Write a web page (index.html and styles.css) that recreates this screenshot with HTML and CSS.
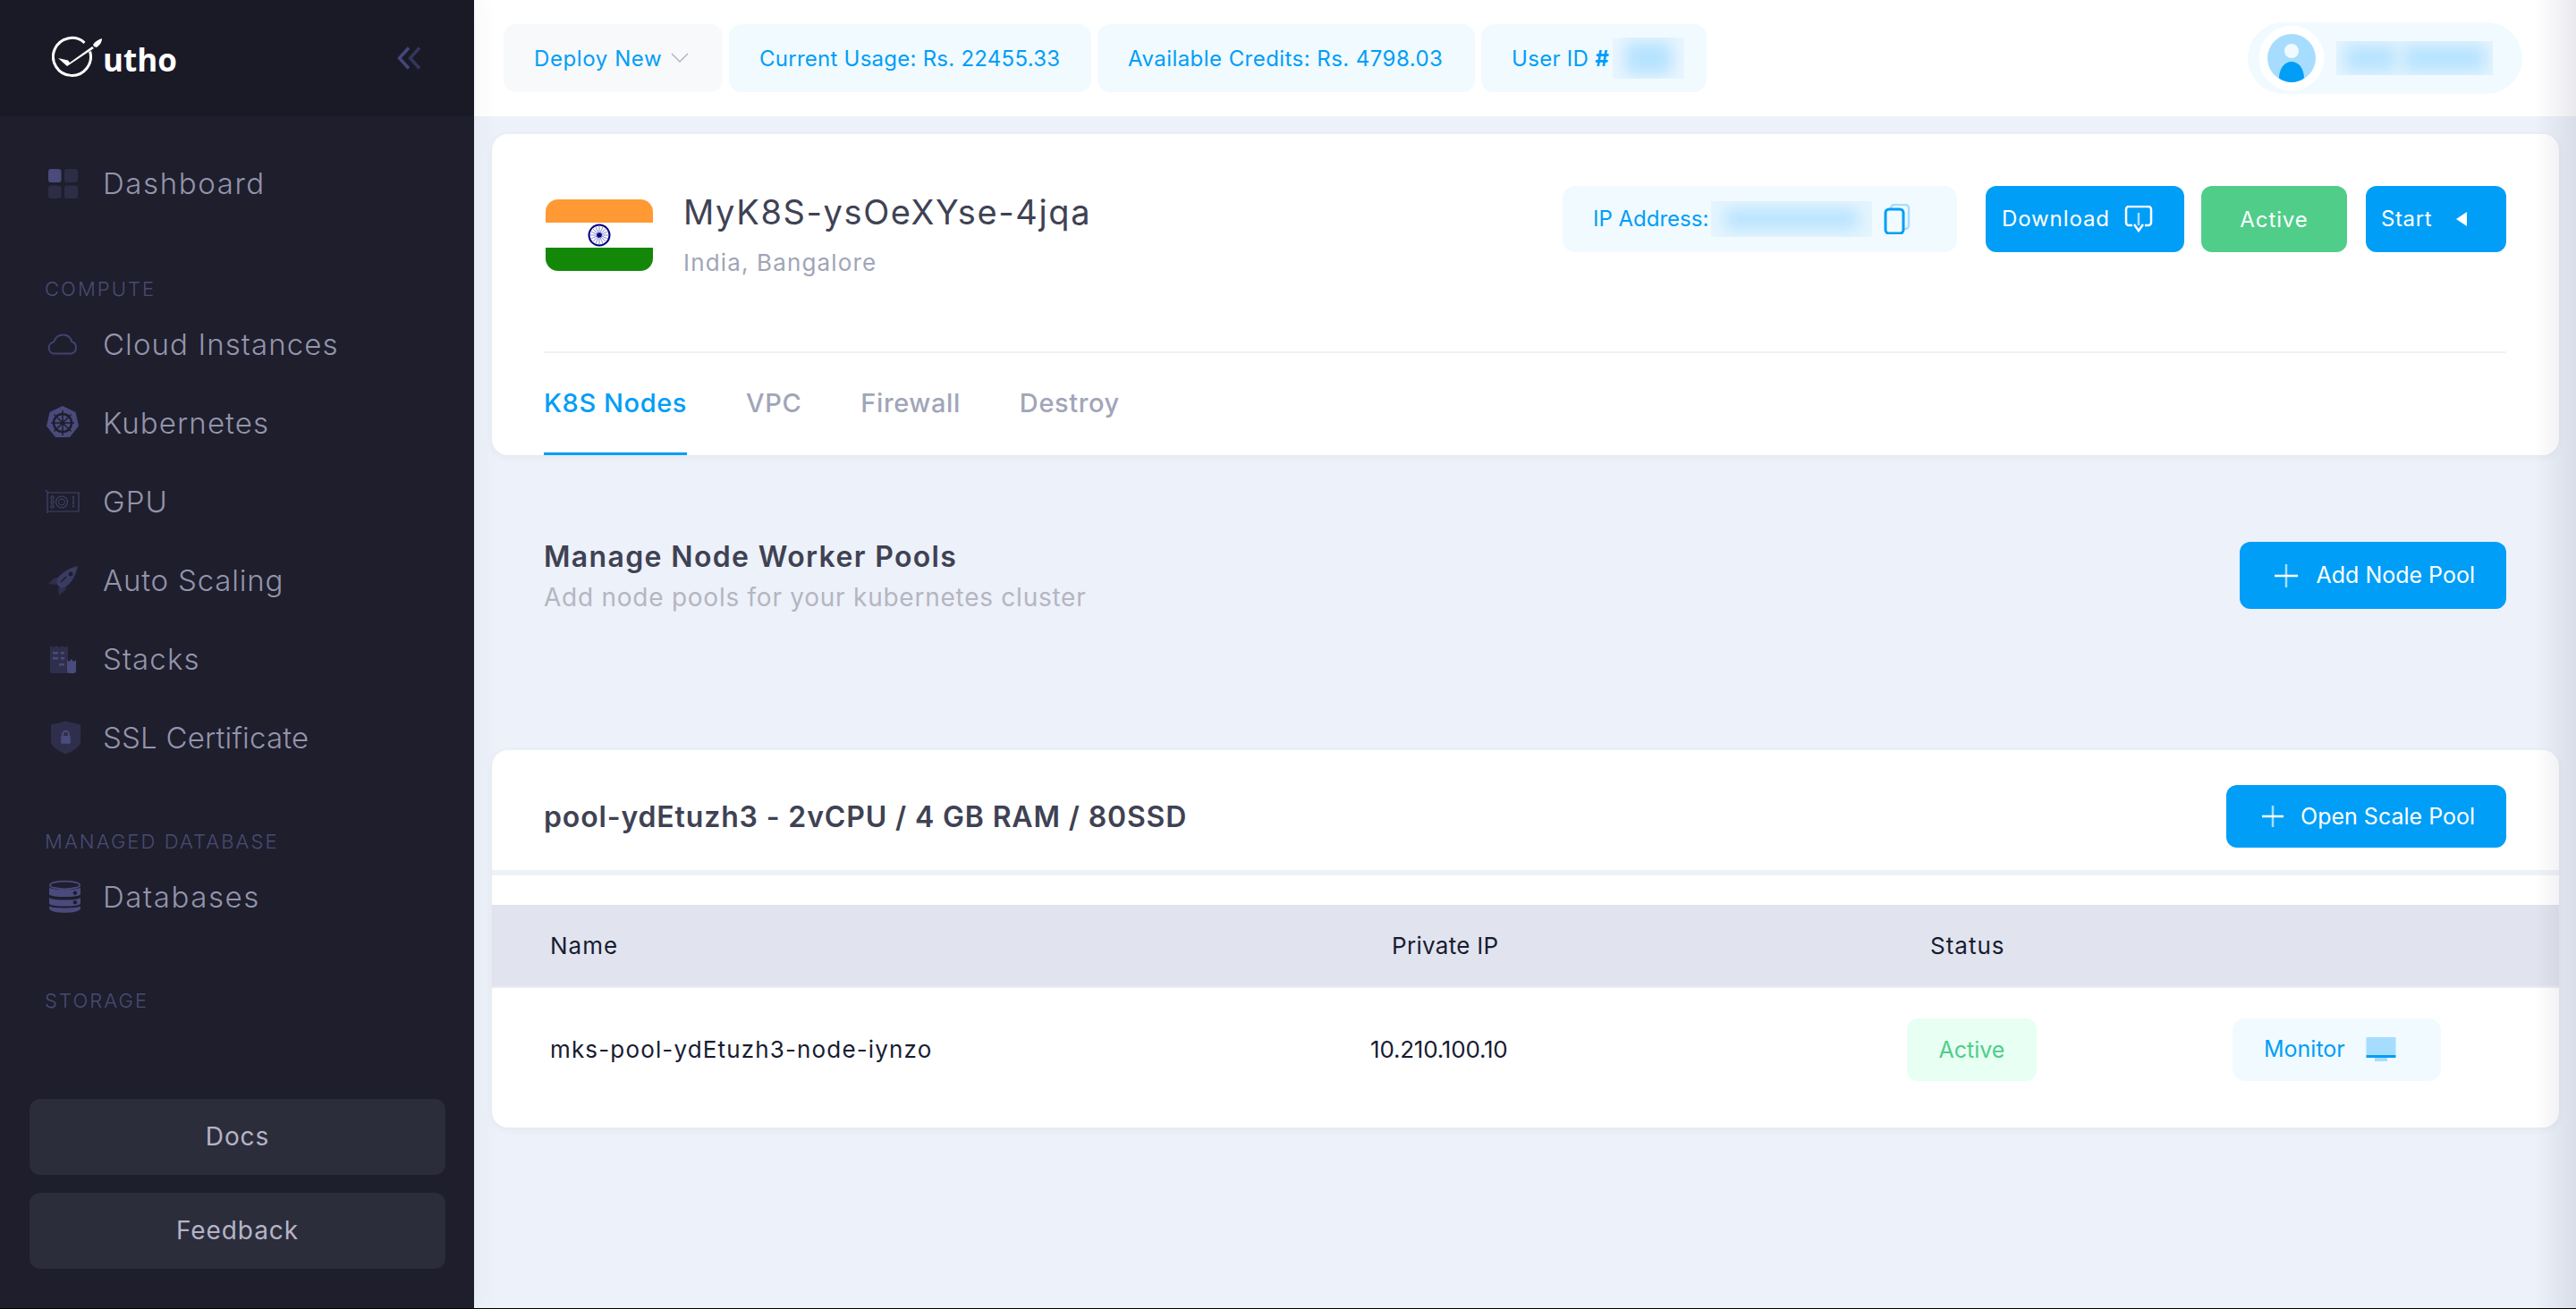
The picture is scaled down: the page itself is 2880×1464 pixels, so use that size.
FILE: index.html

```html
<!DOCTYPE html>
<html>
<head>
<meta charset="utf-8">
<title>MyK8S-ysOeXYse-4jqa</title>
<link rel="stylesheet" href="styles.css">
</head>
<body>
<div class="app">
  <aside class="sidebar">
    <div class="brand">
      <div class="logo">
        <svg class="logo-mark" width="60" height="50" viewBox="0 0 60 50">
          <path d="M36.5 7.8A21 21 0 1 0 42.6 17.5" fill="none" stroke="#fff" stroke-width="3"/>
          <path d="M7 25l11 2.5 2 2.5L45 12l2 2-30 20z" fill="#fff"/>
          <path d="M46 10c3-4 6-6 10-7 0 4-2 7-6 10l-3-1z" fill="#fff"/>
        </svg>
        <span class="logo-text">utho</span>
      </div>
      <svg class="collapse" width="27" height="26" viewBox="0 0 27 26">
        <path d="M13 1.5L2.5 13 13 24.5" fill="none" stroke="#45467a" stroke-width="3.5"/>
        <path d="M25 1.5L14.5 13 25 24.5" fill="none" stroke="#34355a" stroke-width="3.5"/>
      </svg>
    </div>
    <nav class="nav">
      <a class="nav-item nav-first nav-wide">
        <span class="nav-icon">
          <svg width="33" height="33" viewBox="0 0 33 33">
            <rect x="0" y="0" width="14.5" height="15" rx="3" fill="#4a4b7c"/>
            <rect x="18" y="0" width="15" height="15" rx="3" fill="#2d2d46"/>
            <rect x="0" y="18.5" width="14.5" height="14.5" rx="3" fill="#2d2d46"/>
            <rect x="18" y="18.5" width="15" height="14.5" rx="3" fill="#2d2d46"/>
          </svg>
        </span>
        Dashboard
      </a>
      <div class="nav-label nav-label-compute">COMPUTE</div>
      <a class="nav-item">
        <span class="nav-icon">
          <svg width="36" height="24" viewBox="0 0 36 24">
            <path d="M9 22.5a6.5 6.5 0 0 1-1-12.900C10 4 14 1.5 18.5 1.5c4.8 0 8.5 3 9.7 7.5a7 7 0 0 1-.7 13.5z" fill="none" stroke="#42436f" stroke-width="2"/>
          </svg>
        </span>
        Cloud Instances
      </a>
      <a class="nav-item">
        <span class="nav-icon">
          <svg width="40" height="40" viewBox="0 0 40 40">
            <path d="M20 1l14.5 7 3.5 15.5-10 12.500H12L2 23.5 5.5 8z" fill="#4a4b7c"/>
            <circle cx="20" cy="20" r="10" fill="none" stroke="#1e1e2d" stroke-width="2.4"/>
            <circle cx="20" cy="20" r="2.5" fill="#1e1e2d"/>
            <path d="M20 6v28M7 20h26M10.5 10.5l19 19M29.5 10.5l-19 19" stroke="#1e1e2d" stroke-width="1.5"/>
          </svg>
        </span>
        Kubernetes
      </a>
      <a class="nav-item">
        <span class="nav-icon">
          <svg width="40" height="28" viewBox="0 0 40 28">
            <path d="M1 1l2 2v24M3 4h35v21H3" fill="none" stroke="#42436f" stroke-width="1.2"/>
            <circle cx="19" cy="14.5" r="6.5" fill="none" stroke="#42436f" stroke-width="1.2"/>
            <circle cx="19" cy="14.5" r="3.5" fill="none" stroke="#42436f"/>
            <path d="M7 8h3v3H7zM7 13h3v3H7zM7 18h3v3H7z" fill="none" stroke="#42436f"/>
            <path d="M32 8v13" stroke="#42436f" stroke-width="2" stroke-dasharray="1.5 1"/>
          </svg>
        </span>
        GPU
      </a>
      <a class="nav-item nav-tight">
        <span class="nav-icon">
          <svg width="33" height="33" viewBox="0 0 33 33">
            <path d="M13 12l-7 2-6 6 8 1z" fill="#2f2f4c"/>
            <path d="M21 20l-2 7-7 6-1-8z" fill="#2f2f4c"/>
            <path d="M33 0C24 2 15 7 10 14l-1 6 5 5 6-2c7-5 11-14 13-23z" fill="#3a3b63"/>
            <circle cx="25" cy="9" r="2.5" fill="#1e1e2d"/>
            <path d="M14 18l6-6M3 31l6-6" stroke="#1e1e2d" stroke-width="1.5"/>
          </svg>
        </span>
        Auto Scaling
      </a>
      <a class="nav-item">
        <span class="nav-icon">
          <svg width="29" height="32" viewBox="0 0 29 32">
            <path d="M0 1l3.5 2L7 1l3.5 2L14 1l3.5 2L20 1v31H2a2 2 0 0 1-2-2z" fill="#2f2f4c"/>
            <path d="M19 17l2 2 3-3 2 3 3-2v12a3 3 0 0 1-3 3h-4a3 3 0 0 1-3-3z" fill="#4a4b7c"/>
            <path d="M3 8h6v2.5H3zM12 8h4v2.5h-4zM3 14h6v2.5H3zM12 14h4v2.5h-4zM10 21h6v2.5h-6z" fill="#4a4b7c"/>
          </svg>
        </span>
        Stacks
      </a>
      <a class="nav-item nav-ssl">
        <span class="nav-icon nav-icon-shield">
          <svg width="34" height="38" viewBox="0 0 34 38">
            <path d="M17 0l17 4v20c0 5-9 11-17 14C9 35 0 29 0 24V4z" fill="#2f2f4c"/>
            <rect x="11.5" y="17" width="11" height="9" rx="1" fill="#4a4b7c"/>
            <path d="M13.5 18v-3a3.5 3.5 0 0 1 7 0v3" fill="none" stroke="#4a4b7c" stroke-width="2"/>
          </svg>
        </span>
        SSL Certificate
      </a>
      <div class="nav-label nav-label-db">MANAGED DATABASE</div>
      <a class="nav-item nav-wide">
        <span class="nav-icon nav-icon-db">
          <svg width="40" height="42" viewBox="0 0 40 42">
            <ellipse cx="20" cy="6" rx="19" ry="5" fill="none" stroke="#4a4b7c" stroke-width="2"/>
            <path d="M0 9c4 4 36 4 40 0v9c-4 4-36 4-40 0z" fill="#4a4b7c"/>
            <path d="M0 22c4 4 36 4 40 0v8c-4 4-36 4-40 0z" fill="#4a4b7c"/>
            <path d="M0 33c4 3 36 3 40 0v3c-2 7-38 7-40 0z" fill="#4a4b7c"/>
            <circle cx="33" cy="16" r="2.5" fill="#1e1e2d"/>
            <circle cx="33" cy="28" r="2.5" fill="#1e1e2d"/>
          </svg>
        </span>
        Databases
      </a>
      <div class="nav-label nav-label-storage">STORAGE</div>
    </nav>
    <div class="side-foot">
      <a class="side-btn">Docs</a>
      <a class="side-btn">Feedback</a>
    </div>
  </aside>

  <main class="main">
    <header class="topbar">
      <div class="pills">
        <div class="pill pill-deploy">
          <span>Deploy New</span>
          <svg width="20" height="12" viewBox="0 0 20 12"><path d="M1 1l9 9 9-9" fill="none" stroke="#b5b5c3" stroke-width="1.5"/></svg>
        </div>
        <div class="pill pill-usage">Current Usage: Rs. 22455.33</div>
        <div class="pill pill-credits">Available Credits: Rs. 4798.03</div>
        <div class="pill pill-user"><span>User ID <b>#</b></span><span class="blur-box blur-id"><i></i></span></div>
      </div>
      <div class="profile">
        <svg class="avatar" width="74" height="74" viewBox="0 0 74 74">
          <circle cx="37" cy="37" r="36.5" fill="#fff"/>
          <circle cx="37" cy="37" r="27" fill="#a6ddff"/>
          <circle cx="37" cy="29" r="8" fill="#f1faff"/>
          <path d="M37 64a26 26 0 0 1-14-4.5C23 49 29 41 37 41s14 8 14 18.5A26 26 0 0 1 37 64z" fill="#009ef7"/>
        </svg>
        <span class="blur-box blur-name"><i></i><i></i></span>
      </div>
    </header>

    <div class="content">
      <section class="card cluster">
        <div class="cluster-head">
          <div class="flag">
            <svg width="26" height="26" viewBox="0 0 26 26">
              <circle cx="13" cy="13" r="11.5" fill="#fff" stroke="#000080" stroke-width="2"/>
              <path d="M13 2v22M2 13h22M5.2 5.2l15.6 15.6M20.8 5.2L5.2 20.8M8.8 3l8.4 20M17.2 3L8.8 23M3 8.8l20 8.4M23 8.8L3 17.2" stroke="#5a5ac0" stroke-width="0.7"/>
              <circle cx="13" cy="13" r="2.8" fill="#000080"/>
            </svg>
          </div>
          <div class="cluster-name">
            <h1>MyK8S-ysOeXYse-4jqa</h1>
            <p>India, Bangalore</p>
          </div>
          <div class="cluster-actions">
            <div class="ip-box"><span class="ip-label">IP Address:</span><span class="blur-box blur-ip"><i></i></span>
              <svg width="30" height="34" viewBox="0 0 30 34">
                <rect x="8" y="1" width="20" height="27" rx="4" fill="none" stroke="#a6ddff" stroke-width="2.5"/>
                <rect x="2" y="6" width="20" height="27" rx="4" fill="#f1faff" stroke="#009ef7" stroke-width="3"/>
              </svg>
            </div>
            <a class="btn btn-download"><span class="btn-text">Download</span>
              <svg width="32" height="30" viewBox="0 0 32 30">
                <path d="M9 22H5a3 3 0 0 1-3-3V4a3 3 0 0 1 3-3h22a3 3 0 0 1 3 3v15a3 3 0 0 1-3 3h-4" fill="none" stroke="#fff" stroke-width="2.5"/>
                <path d="M16 8v14" stroke="#a6ddff" stroke-width="2.5"/>
                <path d="M11 21l5 7 5-7" fill="none" stroke="#fff" stroke-width="2.5"/>
              </svg>
            </a>
            <a class="btn btn-active">Active</a>
            <a class="btn btn-start"><span class="btn-text">Start</span>
              <svg width="14" height="16" viewBox="0 0 14 16"><path d="M13 0v16L1 8z" fill="#fff"/></svg>
            </a>
          </div>
        </div>
        <div class="tabs">
          <a class="tab tab-on">K8S Nodes</a>
          <a class="tab">VPC</a>
          <a class="tab">Firewall</a>
          <a class="tab">Destroy</a>
        </div>
      </section>

      <section class="pools-head">
        <div>
          <h2>Manage Node Worker Pools</h2>
          <p>Add node pools for your kubernetes cluster</p>
        </div>
        <a class="btn btn-add">
          <svg width="26" height="26" viewBox="0 0 26 26"><path d="M13 0v26" stroke="#a6ddff" stroke-width="2.5"/><path d="M0 13h26" stroke="#fff" stroke-width="2.5"/></svg>
          <span class="btn-text">Add Node Pool</span>
        </a>
      </section>

      <section class="card pool">
        <div class="pool-head">
          <h3>pool-ydEtuzh3 - 2vCPU / 4 GB RAM / 80SSD</h3>
          <a class="btn btn-scale">
            <svg width="24" height="24" viewBox="0 0 24 24"><path d="M12 0v24" stroke="#a6ddff" stroke-width="2.5"/><path d="M0 12h24" stroke="#fff" stroke-width="2.5"/></svg>
            Open Scale Pool
          </a>
        </div>
        <div class="table">
          <div class="row row-head">
            <div class="col-name">Name</div>
            <div class="col-ip">Private IP</div>
            <div class="col-status">Status</div>
            <div></div>
          </div>
          <div class="row row-body">
            <div class="col-name">mks-pool-ydEtuzh3-node-iynzo</div>
            <div class="col-ip">10.210.100.10</div>
            <div class="col-status"><span class="chip">Active</span></div>
            <div class="col-action">
              <a class="monitor"><span class="monitor-text">Monitor</span>
                <svg width="34" height="28" viewBox="0 0 34 28">
                  <rect x="0.5" y="0" width="33" height="20" fill="#a6ddff"/>
                  <rect x="0.5" y="20" width="33" height="3" fill="#009ef7"/>
                  <rect x="10" y="23" width="14" height="4" fill="#a6ddff"/>
                </svg>
              </a>
            </div>
          </div>
        </div>
      </section>
    </div>
  </main>
</div>
<div class="edge"></div>
</body>
</html>
```

FILE: styles.css

```css
* {
  box-sizing: border-box;
}
html, body {
  margin: 0;
  height: 100%;
  overflow: hidden;
}
body {
  font-family: "Inter", "Open Sans", sans-serif;
  background: #edf1f9;
  color: #3f4254;
}
a {
  text-decoration: none;
}
h1, h2, h3, p {
  margin: 0;
}
.app {
  display: flex;
  height: 1464px;
  border-bottom: 1px solid #000;
}

/* sidebar */
.sidebar {
  flex: 0 0 530px;
  background: #1e1e2d;
  display: flex;
  flex-direction: column;
  box-shadow: 0 0 30px rgba(60, 60, 90, 0.06);
  z-index: 2;
}
.brand {
  height: 130px;
  background: #1a1a27;
  display: flex;
  align-items: center;
  justify-content: space-between;
  padding: 0 59px 0 58px;
}
.logo {
  display: flex;
  align-items: center;
}
.logo-text {
  font-family: "Open Sans", sans-serif;
  font-weight: 700;
  font-size: 35px;
  color: #fff;
  margin-left: -3px;
  margin-top: 2px;
}
.nav {
  display: flex;
  flex-direction: column;
  padding-left: 50px;
}
.nav-item {
  height: 88px;
  display: flex;
  align-items: center;
  font-size: 33px;
  letter-spacing: 1.1px;
  font-weight: 300;
  color: #9494ab;
}
.nav-wide {
  letter-spacing: 1.6px;
}
.nav-tight {
  letter-spacing: 0.8px;
}
.nav-ssl {
  letter-spacing: 0.2px;
}
.nav-icon {
  width: 40px;
  margin-right: 25px;
  display: flex;
  justify-content: center;
  align-items: center;
}
.nav-icon-shield {
  padding-left: 7px;
}
.nav-icon-db {
  padding-left: 5px;
}
.nav-first {
  margin-top: 31px;
}
.nav-label {
  font-size: 22px;
  font-weight: 300;
  letter-spacing: 2.1px;
  color: #4a4b72;
  height: 30px;
  line-height: 30px;
}
.nav-label-compute {
  margin-top: 59px;
  margin-bottom: 3px;
}
.nav-label-db {
  margin-top: 57px;
  margin-bottom: 3px;
}
.nav-label-storage {
  margin-top: 57px;
}
.side-foot {
  margin-top: auto;
  padding: 0 32px 44px 33px;
  display: flex;
  flex-direction: column;
  gap: 20px;
}
.side-btn {
  height: 85px;
  padding-bottom: 2px;
  border-radius: 12px;
  background: #2b2d3b;
  color: #b5b3c7;
  font-size: 28px;
  letter-spacing: 0.9px;
  display: flex;
  align-items: center;
  justify-content: center;
}

/* top bar */
.main {
  flex: 1;
  min-width: 0;
}
.topbar {
  height: 130px;
  background: #fff;
  display: flex;
  align-items: center;
  justify-content: space-between;
  padding: 0 60px 0 33px;
}
.pills {
  display: flex;
  gap: 7px;
}
.pill {
  height: 76px;
  border-radius: 14px;
  background: #f1faff;
  color: #009ef7;
  font-size: 24px;
  letter-spacing: 0.3px;
  display: flex;
  align-items: center;
  padding-left: 34px;
  white-space: nowrap;
}
.pill-deploy {
  width: 245px;
  background: #f7f9fb;
  letter-spacing: 0.6px;
  gap: 10px;
}
.pill-usage {
  width: 405px;
  letter-spacing: 0.25px;
}
.pill-credits {
  width: 422px;
  letter-spacing: 0.45px;
}
.pill-user {
  width: 252px;
  gap: 4px;
}
.blur-box {
  display: inline-flex;
  overflow: hidden;
  align-items: center;
  justify-content: center;
}
.blur-box i {
  display: block;
  background: #b4e2ff;
  filter: blur(9px);
}
.blur-id {
  width: 80px;
  height: 46px;
  background: #eaf6fe;
}
.blur-id i {
  width: 52px;
  height: 36px;
}
.profile {
  width: 307px;
  height: 80px;
  border-radius: 40px;
  background: #f1faff;
  display: flex;
  align-items: center;
  padding-left: 12px;
  gap: 13px;
}
.blur-name {
  width: 175px;
  height: 38px;
  background: #e4f4fe;
  gap: 10px;
}
.blur-name i:first-child {
  width: 56px;
  height: 28px;
}
.blur-name i:last-child {
  width: 90px;
  height: 28px;
}

/* cluster card */
.content {
  padding: 20px 19px 0 20px;
}
.card {
  background: #fff;
  border-radius: 18px;
  box-shadow: 0 2px 8px rgba(60, 70, 110, 0.06);
}
.cluster {
  height: 359px;
  padding: 58px 59px 0 60px;
}
.cluster-head {
  display: flex;
  align-items: flex-start;
  height: 187px;
  border-bottom: 2px solid #eff2f5;
  margin-left: -2px;
  padding-left: 2px;
}
.flag {
  width: 120px;
  height: 80px;
  margin-top: 15px;
  border-radius: 14px;
  background: linear-gradient(#ff9933 33%, #fff 33%, #fff 67%, #138808 67%);
  display: flex;
  align-items: center;
  justify-content: center;
}
.cluster-name {
  margin-left: 34px;
}
.cluster-name h1 {
  font-size: 38px;
  letter-spacing: 1.6px;
  font-weight: 400;
  line-height: 54px;
  margin-top: 2px;
}
.cluster-name p {
  font-size: 26px;
  letter-spacing: 1.15px;
  color: #a1a5b7;
  line-height: 38px;
  margin-top: 11px;
}
.cluster-actions {
  margin-left: auto;
  display: flex;
  align-items: center;
}
.ip-box {
  width: 441px;
  height: 74px;
  border-radius: 14px;
  background: #f1faff;
  color: #009ef7;
  font-size: 24px;
  display: flex;
  align-items: center;
  padding-left: 34px;
  margin-right: 32px;
}
.ip-label {
  padding-bottom: 2px;
}
.blur-ip {
  width: 180px;
  height: 40px;
  background: #e6f5fe;
  margin: 0 13px 0 3px;
}
.blur-ip i {
  width: 150px;
  height: 22px;
}
.btn {
  background: #009ef7;
  color: #fff;
  border-radius: 12px;
  font-size: 24px;
  display: flex;
  align-items: center;
}
.btn-text {
  padding-bottom: 2px;
}
.btn-download {
  width: 222px;
  height: 74px;
  gap: 16px;
  padding-left: 18px;
  letter-spacing: 0.9px;
  margin-right: 19px;
}
.btn-active {
  width: 163px;
  height: 74px;
  background: #50cd89;
  justify-content: center;
  letter-spacing: 0.9px;
  margin-right: 21px;
}
.btn-start {
  width: 157px;
  height: 74px;
  gap: 26px;
  padding-left: 17px;
  letter-spacing: 0.6px;
}
.tabs {
  display: flex;
  height: 112px;
  gap: 66px;
  margin-left: -2px;
}
.tab {
  font-size: 29px;
  font-weight: 500;
  letter-spacing: 0.6px;
  color: #a1a5b7;
  display: flex;
  align-items: center;
  height: 114px;
  padding-bottom: 3px;
}
.tab-on {
  color: #009ef7;
  border-bottom: 3px solid #009ef7;
  padding-bottom: 0;
}

/* pools */
.pools-head {
  height: 330px;
  padding: 0 59px 0 58px;
  display: flex;
  justify-content: space-between;
  align-items: flex-start;
}
.pools-head h2 {
  font-size: 32px;
  letter-spacing: 1.35px;
  font-weight: 600;
  margin-top: 91px;
  line-height: 46px;
}
.pools-head p {
  font-size: 28px;
  letter-spacing: 0.75px;
  color: #b5b5c3;
  line-height: 40px;
  margin-top: 2px;
}
.btn-add {
  width: 298px;
  height: 75px;
  margin-top: 97px;
  gap: 20px;
  font-size: 25px;
  justify-content: flex-end;
  padding-right: 35px;
}
.pool {
  height: 422px;
  overflow: hidden;
}
.pool-head {
  height: 140px;
  padding: 14px 59px 0 58px;
  display: flex;
  align-items: center;
  justify-content: space-between;
  border-bottom: 6px solid #eff2f5;
  margin-bottom: 33px;
}
.pool-head h3 {
  font-size: 32px;
  letter-spacing: 0.85px;
  font-weight: 600;
}
.btn-scale {
  width: 313px;
  height: 70px;
  gap: 19px;
  font-size: 25px;
  justify-content: flex-end;
  padding-right: 35px;
}
.row {
  display: grid;
  grid-template-columns: 910px 605px 362px 1fr;
  align-items: center;
  padding-left: 65px;
  font-size: 26px;
  color: #181c32;
}
.row-head {
  height: 93px;
  background: #e1e4ee;
  border-bottom: 2px solid #eaedf3;
}
.row-head .col-name {
  letter-spacing: 1px;
}
.row-head .col-ip {
  padding-left: 31px;
  letter-spacing: 0.3px;
}
.row-head .col-status {
  padding-left: 28px;
  letter-spacing: 1px;
}
.row-body {
  height: 138px;
}
.row-body .col-name {
  letter-spacing: 1.15px;
  padding-bottom: 2px;
}
.row-body .col-ip {
  padding-left: 7px;
  padding-bottom: 2px;
  letter-spacing: -0.2px;
}
.row-body .col-status {
  margin-left: 2px;
}
.chip {
  display: inline-flex;
  width: 145px;
  height: 70px;
  align-items: center;
  justify-content: center;
  border-radius: 12px;
  background: #e8fff3;
  color: #50cd89;
  font-size: 25px;
}
.monitor {
  width: 233px;
  height: 70px;
  margin-left: 4px;
  padding-left: 35px;
  border-radius: 14px;
  background: #f1faff;
  color: #009ef7;
  font-size: 25px;
  display: flex;
  align-items: center;
  gap: 23px;
}
.monitor-text {
  padding-bottom: 3px;
}

/* faint shade down the right side of the window */
.edge {
  position: absolute;
  top: 0;
  right: 0;
  bottom: 0;
  width: 46px;
  background: linear-gradient(to right, rgba(40, 45, 80, 0), rgba(40, 45, 80, 0.1));
  z-index: 5;
}
```
